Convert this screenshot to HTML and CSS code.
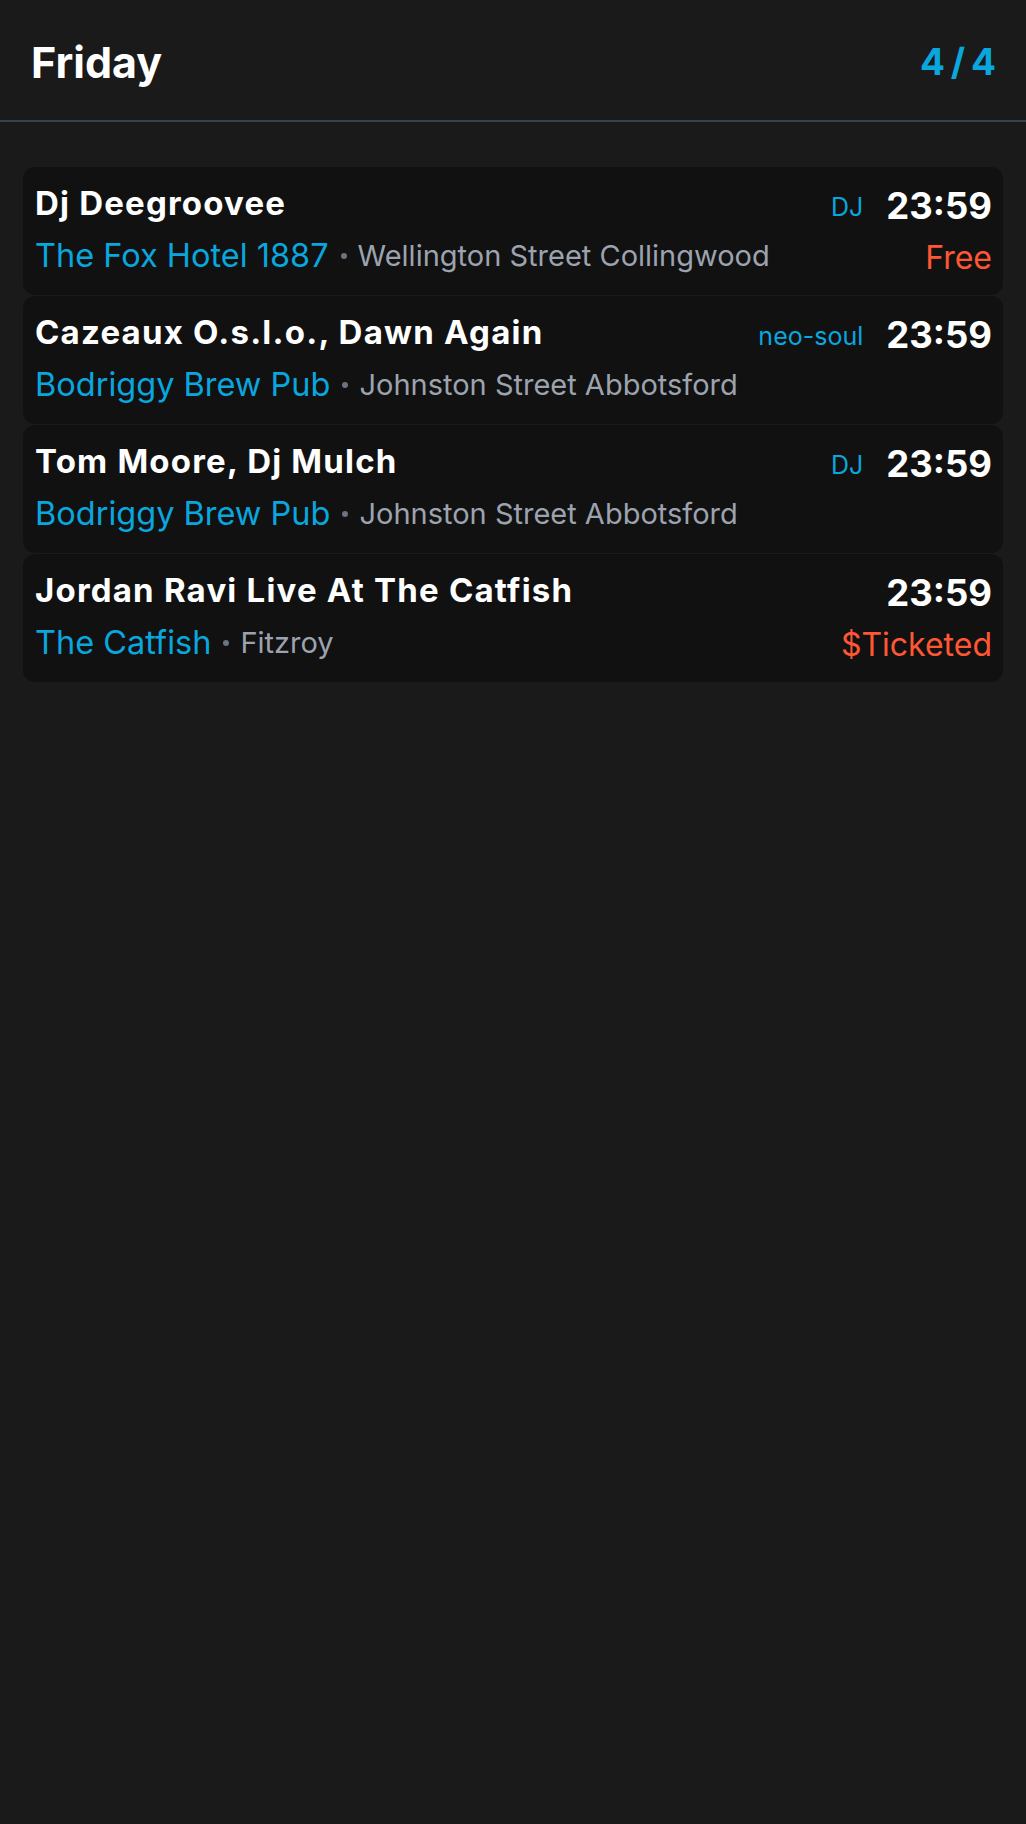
FILE: index.html
```html
<!DOCTYPE html>
<html lang="en">
<head>
<meta charset="utf-8">
<title>Friday</title>
<link rel="stylesheet" href="styles.css">
</head>
<body>
<header class="topbar">
  <h1 class="day">Friday</h1>
  <div class="count">4 / 4</div>
</header>
<main class="list">
  <article class="card">
    <div class="row row-top">
      <div class="title">Dj Deegroovee</div>
      <div class="meta"><span class="tag">DJ</span><span class="time">23:59</span></div>
    </div>
    <div class="row row-bottom">
      <div class="where"><span class="venue">The Fox Hotel 1887</span><span class="dot"></span><span class="place">Wellington Street Collingwood</span></div>
      <div class="price">Free</div>
    </div>
  </article>
  <article class="card">
    <div class="row row-top">
      <div class="title">Cazeaux O.s.l.o., Dawn Again</div>
      <div class="meta"><span class="tag">neo-soul</span><span class="time">23:59</span></div>
    </div>
    <div class="row row-bottom">
      <div class="where"><span class="venue">Bodriggy Brew Pub</span><span class="dot"></span><span class="place">Johnston Street Abbotsford</span></div>
    </div>
  </article>
  <article class="card">
    <div class="row row-top">
      <div class="title">Tom Moore, Dj Mulch</div>
      <div class="meta"><span class="tag">DJ</span><span class="time">23:59</span></div>
    </div>
    <div class="row row-bottom">
      <div class="where"><span class="venue">Bodriggy Brew Pub</span><span class="dot"></span><span class="place">Johnston Street Abbotsford</span></div>
    </div>
  </article>
  <article class="card">
    <div class="row row-top">
      <div class="title">Jordan Ravi Live At The Catfish</div>
      <div class="meta"><span class="time">23:59</span></div>
    </div>
    <div class="row row-bottom">
      <div class="where"><span class="venue">The Catfish</span><span class="dot"></span><span class="place">Fitzroy</span></div>
      <div class="price">$Ticketed</div>
    </div>
  </article>
</main>
</body>
</html>
```
FILE: styles.css
```css
* { box-sizing: border-box; }
html, body {
  margin: 0;
  padding: 0;
  background: #1a1a1a;
  min-height: 100%;
}
body {
  font-family: Inter, "Noto Sans", sans-serif;
  color: #ffffff;
  -webkit-font-smoothing: antialiased;
}
.topbar {
  height: 122px;
  display: flex;
  align-items: center;
  justify-content: space-between;
  padding: 0 30px 0 31px;
  border-bottom: 2px solid #374151;
}
.day {
  margin: 0;
  font-size: 43px;
  font-weight: 700;
  line-height: 1;
  padding-top: 5px;
}
.count {
  font-size: 37px;
  font-weight: 700;
  color: #0aa6de;
  line-height: 1;
  word-spacing: -3px;
  padding-top: 3px;
}
.list {
  padding: 45px 23px 0 23px;
  display: flex;
  flex-direction: column;
  gap: 1px;
}
.card {
  background: #111111;
  border-radius: 12px;
  padding: 10px 11px 18px 12px;
  height: 128px;
}
.row {
  display: flex;
  align-items: center;
  justify-content: space-between;
}
.row-top { height: 56px; }
.row-bottom { height: 44px; }
.title {
  font-size: 33px;
  font-weight: 700;
  letter-spacing: 1.2px;
  white-space: nowrap;
  padding-bottom: 4px;
}
.meta {
  display: flex;
  align-items: center;
  gap: 23px;
}
.tag {
  font-size: 25px;
  color: #0aa6de;
  padding-top: 4px;
}
.time {
  font-size: 36.5px;
  font-weight: 700;
  padding-top: 1px;
}
.where {
  display: flex;
  align-items: center;
  white-space: nowrap;
}
.venue {
  font-size: 32.5px;
  color: #0aa6de;
}
.dot {
  width: 6px;
  height: 6px;
  border-radius: 50%;
  background: #6b7280;
  margin: 2px 11px 0 12px;
}
.place {
  font-size: 29px;
  color: #9ca3af;
  padding-top: 1px;
}
.price {
  font-size: 32px;
  color: #ff5733;
  padding-top: 4px;
}
```
